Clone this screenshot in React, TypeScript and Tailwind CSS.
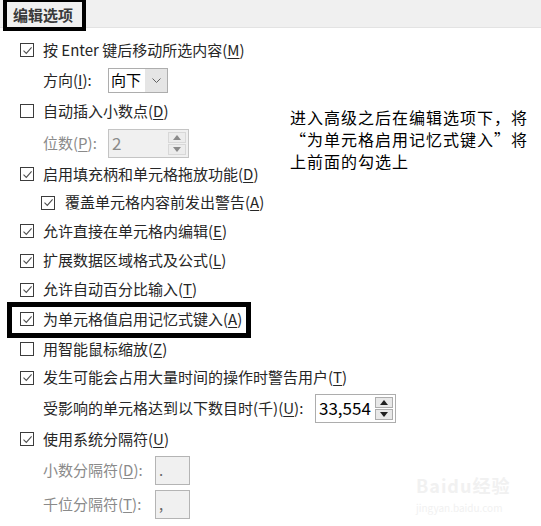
import React from 'react';

const font = { fontFamily: '"Noto Sans CJK SC", "Noto Sans", sans-serif' };

function Check({ checked }: { checked: boolean }) {
  return (
    <div className="w-[14px] h-[14px] border border-[#3c3c3c] bg-white flex items-center justify-center shrink-0">
      {checked && (
        <svg width="11" height="11" viewBox="0 0 11 11">
          <path d="M1.5 5.6 L4.3 8.4 L9.6 2.4" fill="none" stroke="#505050" strokeWidth="1.1" />
        </svg>
      )}
    </div>
  );
}

function Label({ text, k, rest = '' }: { text: string; k: string; rest?: string }) {
  return (
    <span className="whitespace-nowrap">
      {text}(<span className="underline underline-offset-2">{k}</span>){rest}
    </span>
  );
}

function CheckRow({ h, checked, text, k, indent = false }: { h: string; checked: boolean; text: string; k: string; indent?: boolean }) {
  return (
    <div className={`flex items-center ${h} ${indent ? 'pl-[41px]' : 'pl-[20px]'}`}>
      <Check checked={checked} />
      <div className={indent ? 'ml-[10px]' : 'ml-[9px]'}>
        <Label text={text} k={k} />
      </div>
    </div>
  );
}

function SpinBtns({ disabled }: { disabled?: boolean }) {
  const c = disabled ? '#8a8a8a' : '#202020';
  return (
    <div className="flex flex-col gap-[1px] h-full py-[2px] pr-[2px]">
      <div className={`flex-1 w-[18px] border ${disabled ? 'border-[#d8d8d8] bg-[#ececec]' : 'border-[#adadad] bg-[#e8e8e8]'} flex items-center justify-center`}>
        <svg width="8" height="5" viewBox="0 0 8 5"><path d="M0 5 L4 0 L8 5 Z" fill={c} /></svg>
      </div>
      <div className={`flex-1 w-[18px] border ${disabled ? 'border-[#d8d8d8] bg-[#ececec]' : 'border-[#adadad] bg-[#e8e8e8]'} flex items-center justify-center`}>
        <svg width="8" height="5" viewBox="0 0 8 5"><path d="M0 0 L4 5 L8 0 Z" fill={c} /></svg>
      </div>
    </div>
  );
}

export default function App() {
  return (
    <div className="relative w-[541px] h-[526px] bg-white text-[15px] text-[#262626] overflow-hidden" style={font}>
      {/* header */}
      <div className="h-[28px] bg-[#f0f0f0] border-b border-[#e3e3e3]" />
      <div className="absolute left-[3px] top-[-2px] w-[83px] h-[33px] border-[4px] border-black bg-[#f0f0f0] flex items-center pl-[6px] pt-[1px]">
        <span className="font-semibold text-[15px] text-[#3a3a3a]">编辑选项</span>
      </div>

      <div className="pt-[7px]">
        <div className="flex items-center h-[30px] pl-[20px]">
          <Check checked />
          <div className="ml-[9px]"><Label text="按 Enter 键后移动所选内容" k="M" /></div>
        </div>

        <div className="flex items-center h-[30px] pl-[43px]">
          <div className="w-[65px]"><Label text="方向" k="I" rest=":" /></div>
          <div className="flex h-[25px] w-[60px] border border-[#adadad] bg-white">
            <div className="flex-1 flex items-center pl-[2px] text-black">向下</div>
            <div className="w-[22px] bg-[#e5e5e5] flex items-center justify-center">
              <svg width="9" height="5" viewBox="0 0 9 5"><path d="M0.5 0.5 L4.5 4.5 L8.5 0.5" fill="none" stroke="#606060" strokeWidth="1" /></svg>
            </div>
          </div>
        </div>

        <CheckRow h="h-[32px]" checked={false} text="自动插入小数点" k="D" />

        <div className="flex items-center h-[32px] pl-[43px] text-[#8a8a8a]">
          <div className="w-[65px]"><Label text="位数" k="P" rest=":" /></div>
          <div className="flex h-[29px] w-[81px] border border-[#c4c4c4] bg-[#f0f0f0]">
            <div className="flex-1 flex items-center pl-[3px] text-[17px] text-[#8a8a8a]">2</div>
            <SpinBtns disabled />
          </div>
        </div>

        <CheckRow h="h-[30px]" checked text="启用填充柄和单元格拖放功能" k="D" />
        <CheckRow h="h-[27px]" checked text="覆盖单元格内容前发出警告" k="A" indent />
        <CheckRow h="h-[30px]" checked text="允许直接在单元格内编辑" k="E" />
        <CheckRow h="h-[29px]" checked text="扩展数据区域格式及公式" k="L" />
        <CheckRow h="h-[29px]" checked text="允许自动百分比输入" k="T" />

        <div className="relative">
          <CheckRow h="h-[30px]" checked text="为单元格值启用记忆式键入" k="A" />
          <div className="absolute left-[7px] top-[-2px] w-[244px] h-[36px] border-[5px] border-black" />
        </div>

        <CheckRow h="h-[30px]" checked={false} text="用智能鼠标缩放" k="Z" />
        <CheckRow h="h-[27px]" checked text="发生可能会占用大量时间的操作时警告用户" k="T" />

        <div className="flex items-center h-[34px] pl-[43px]">
          <div className="w-[272px]"><Label text="受影响的单元格达到以下数目时(千)" k="U" rest=":" /></div>
          <div className="flex h-[29px] w-[81px] border border-[#adadad] bg-white">
            <div className="flex-1 flex items-center pl-[3px] text-[17px] text-black">33,554</div>
            <SpinBtns />
          </div>
        </div>

        <CheckRow h="h-[28px]" checked text="使用系统分隔符" k="U" />

        <div className="flex items-center h-[34px] pl-[43px] text-[#8a8a8a]">
          <div className="w-[112px]"><Label text="小数分隔符" k="D" rest=":" /></div>
          <div className="h-[29px] w-[35px] border border-[#b4b4b4] bg-[#f0f0f0] flex items-center pl-[3px] text-[#666]">.</div>
        </div>
        <div className="flex items-center h-[34px] pl-[43px] text-[#8a8a8a]">
          <div className="w-[112px]"><Label text="千位分隔符" k="T" rest=":" /></div>
          <div className="h-[29px] w-[35px] border border-[#b4b4b4] bg-[#f0f0f0] flex items-center pl-[3px] text-[#666]">,</div>
        </div>
      </div>

      {/* watermark */}
      <div className="absolute left-[416px] top-[472px] text-[#f1f1f1] flex flex-col gap-[3px]">
        <div className="text-[18px] leading-[26px] font-bold tracking-[1px]">Baidu经验</div>
        <div className="text-[10px] leading-[14px]">jingyan.baidu.com</div>
      </div>

      {/* annotation */}
      <div className="absolute left-[290px] top-[106px] text-[16px] leading-[22px] tracking-[1px] text-black">
        <div>进入高级之后在编辑选项下，将</div>
        <div>“为单元格启用记忆式键入”将</div>
        <div>上前面的勾选上</div>
      </div>
    </div>
  );
}
